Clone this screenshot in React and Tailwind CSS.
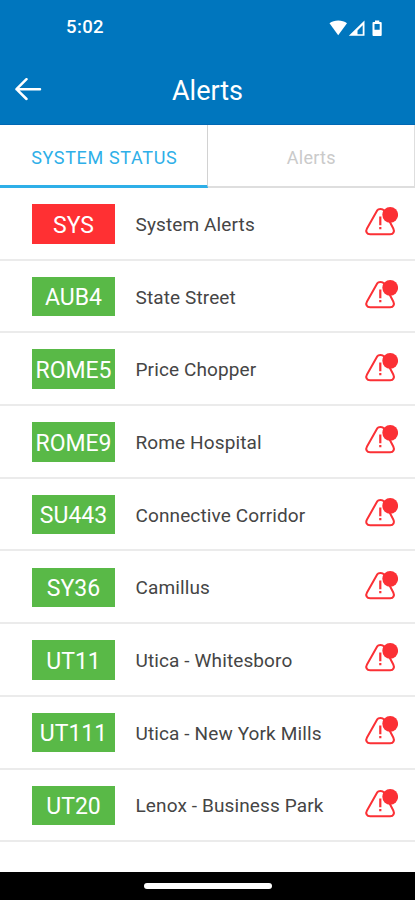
import React from 'react';

const routes = [
  { code: 'SYS', name: 'System Alerts', system: true },
  { code: 'AUB4', name: 'State Street' },
  { code: 'ROME5', name: 'Price Chopper' },
  { code: 'ROME9', name: 'Rome Hospital' },
  { code: 'SU443', name: 'Connective Corridor' },
  { code: 'SY36', name: 'Camillus' },
  { code: 'UT11', name: 'Utica - Whitesboro' },
  { code: 'UT111', name: 'Utica - New York Mills' },
  { code: 'UT20', name: 'Lenox - Business Park' },
];

// Warning triangle with the unread dot on its corner
const AlertIcon = () => (
  <svg className="w-[34px] h-[32px] shrink-0 mb-[2px]" viewBox="0 0 34 32" fill="none">
    <path
      d="M13.3 4.2C14.3 2.5 18.7 2.5 19.7 4.2L29.3 22.5C30.7 25.4 29.5 28.2 26.2 28.2H6.2C2.7 28.2 1.3 25.4 3 22.5Z"
      stroke="#fb3035"
      strokeWidth="2"
      strokeLinejoin="round"
    />
    <path d="M16.3 10.5V19.3M16.3 21V23.2" stroke="#fb3035" strokeWidth="2.2" />
    <circle cx="26.2" cy="8.8" r="7.9" fill="#fb3035" />
  </svg>
);

const StatusBar = () => (
  <div className="flex items-center justify-between h-[55px] pl-[66px] pr-[32px]">
    <span className="text-[18.5px] leading-none font-medium tracking-[0.4px]">5:02</span>
    <svg className="w-[54px] h-[18px]" viewBox="0 0 54 18" fill="#fff">
      <path d="M0.5 4.3C5 0.7 13.5 0.7 18 4.3L9.2 16.2Z" />
      <path d="M35.5 1.5V16.8H19.8ZM33.7 6.3L28.5 11.5V15.2H33.7Z" fillRule="evenodd" />
      <path d="M46 1.5H50.3V3H51.8Q52.7 3 52.7 4V16Q52.7 17 51.8 17H44.4Q43.5 17 43.5 16V4Q43.5 3 44.4 3H46ZM45.5 5V10.7H50.7V5Z" fillRule="evenodd" />
    </svg>
  </div>
);

const App = () => {
  return (
    <div className="flex flex-col w-[415px] h-[900px] bg-white overflow-hidden font-['Roboto',sans-serif]">
      {/* Header */}
      <header className="h-[125px] shrink-0 bg-[#0076be] border-b border-[#0068b4] text-white">
        <StatusBar />
        <div className="grid grid-cols-[1fr_auto_1fr] items-center h-[69px] px-[14px]">
          <button aria-label="Back" className="w-[28px]">
            <svg className="w-[28px] h-[24px]" viewBox="0 0 28 24" fill="none" stroke="#fff" strokeWidth="2.5" strokeLinecap="round" strokeLinejoin="round">
              <path d="M26 11.2H2.5M12.5 1.2L2.5 11.2L12.5 21" />
            </svg>
          </button>
          <h1 className="text-[27px] leading-none pt-[4px]">Alerts</h1>
        </div>
      </header>

      {/* Tabs */}
      <div className="grid grid-cols-2 h-[63px] shrink-0 text-[18px]">
        <button className="border-r border-b-[3px] border-r-[#d2d2d2] border-b-[#2eafe8] text-[#2eafe8] pt-[4px] pl-[2px] tracking-[0.65px]">
          SYSTEM STATUS
        </button>
        <button className="border-r border-b-2 border-[#dedede] text-[#cacaca] pt-[3px] pl-px tracking-[0.3px]">
          Alerts
        </button>
      </div>

      {/* Route list */}
      <ul className="shrink-0">
        {routes.map((route) => (
          <li key={route.code} className="flex items-center h-[72.7px] border-b-2 border-[#ebebeb] pl-[32px] pr-[17px]">
            <span className={`flex items-center justify-center w-[83px] h-[39.5px] pt-[4px] mt-px text-white text-[23px] ${route.system ? 'bg-[#ff3033]' : 'bg-[#59b947]'}`}>
              {route.code}
            </span>
            <span className="flex-1 pl-[20.5px] pt-[3.5px] text-[19px] tracking-[0.12px] text-[#454545] whitespace-nowrap">
              {route.name}
            </span>
            <AlertIcon />
          </li>
        ))}
      </ul>

      {/* Gesture bar */}
      <div className="mt-auto flex justify-center h-[28px] shrink-0 bg-black pt-[11px]">
        <div className="w-[128px] h-[6px] rounded-full bg-white" />
      </div>
    </div>
  );
};

export default App;
